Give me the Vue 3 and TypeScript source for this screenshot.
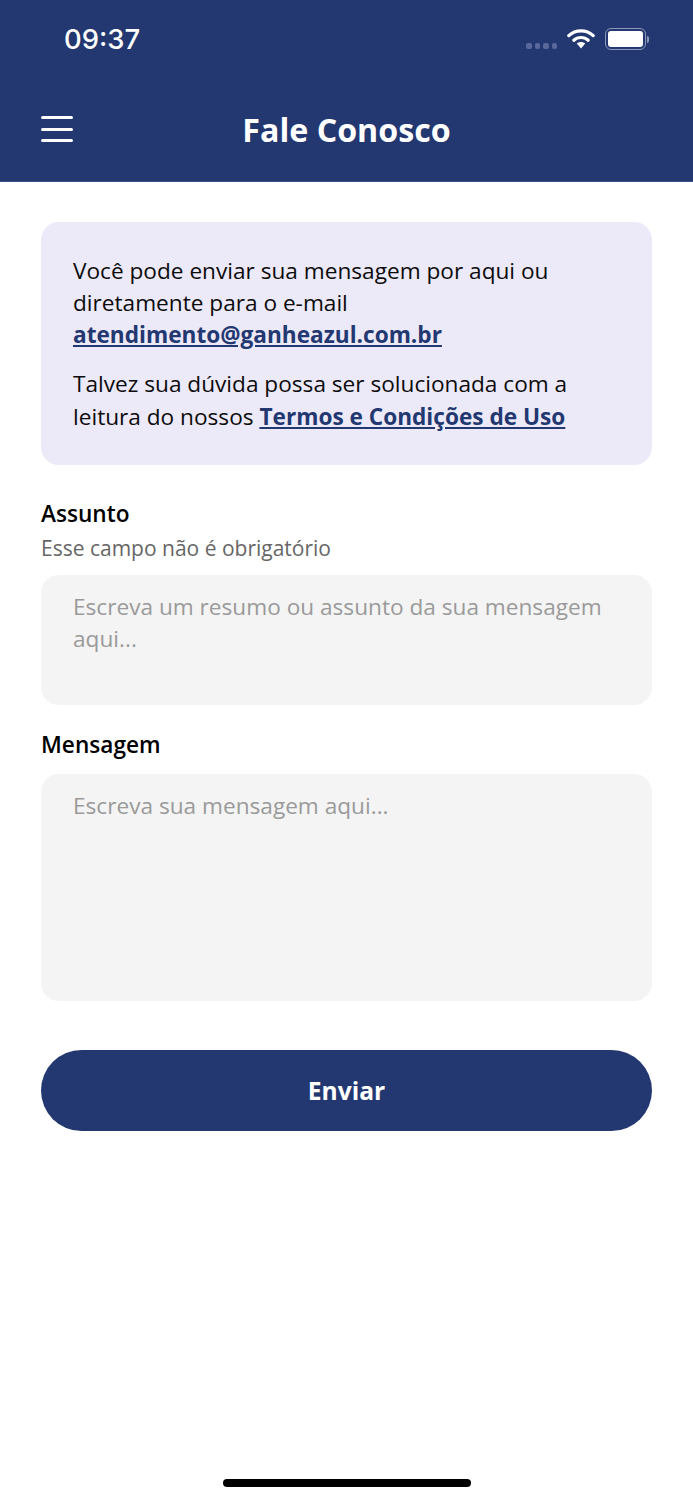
<template>
  <div class="screen">
    <header class="top">
      <div class="status">
        <span class="time">09:37</span>
        <div class="status-icons">
          <div class="signal"><i></i><i></i><i></i><i></i></div>
          <svg class="wifi" width="28" height="21" viewBox="0 0 28 21">
            <path d="M1.8 7.6C8.6 1.2 19.4 1.2 26.2 7.6" fill="none" stroke="#fff" stroke-width="3.2" stroke-linecap="round" />
            <path d="M6.8 12.2C10.8 8.6 17.2 8.6 21.2 12.2" fill="none" stroke="#fff" stroke-width="3.2" stroke-linecap="round" />
            <path d="M9.8 15.6C12.2 13.6 15.8 13.6 18.2 15.6L14 20.4Z" fill="#fff" />
          </svg>
          <div class="battery"><div class="battery-fill"></div></div>
          <div class="battery-tip"></div>
        </div>
      </div>
      <div class="bar">
        <div class="menu"><i></i><i></i><i></i></div>
        <h1>Fale Conosco</h1>
      </div>
    </header>

    <main class="content">
      <section class="notice">
        <p>
          Você pode enviar sua mensagem por aqui ou diretamente para o e-mail
          <a href="#">atendimento@ganheazul.com.br</a>
        </p>
        <p>
          Talvez sua dúvida possa ser solucionada com a leitura do nossos
          <a href="#">Termos e Condições de Uso</a>
        </p>
      </section>

      <div class="field first">
        <label>Assunto</label>
        <span class="hint">Esse campo não é obrigatório</span>
        <div class="input subject">Escreva um resumo ou assunto da sua mensagem aqui...</div>
      </div>

      <div class="field second">
        <label>Mensagem</label>
        <div class="input message">Escreva sua mensagem aqui...</div>
      </div>

      <button class="send" type="button">Enviar</button>
    </main>

    <div class="home-row"><div class="home"></div></div>
  </div>
</template>

<script setup lang="ts">
</script>

<style>
html,
body {
  margin: 0;
  background: #fff;
}
</style>

<style scoped>
.screen {
  width: 693px;
  height: 1500px;
  display: flex;
  flex-direction: column;
  font-family: "Open Sans", sans-serif;
  color: #0c0c0c;
  background: #fff;
  overflow: hidden;
}

.top {
  height: 182px;
  flex: none;
  background: #233871;
  color: #fff;
  box-sizing: border-box;
  border-bottom: 1px solid #3b5289;
}

.status {
  height: 78px;
  display: flex;
  justify-content: space-between;
  align-items: center;
  padding: 0 44px 0 64px;
}

.time {
  font-family: Inter, sans-serif;
  font-size: 27.4px;
  font-weight: 500;
}

.status-icons {
  display: flex;
  align-items: center;
}

.signal {
  display: flex;
  gap: 3px;
  margin: 13px 10px 0 0;
}

.signal i {
  width: 5.5px;
  height: 6px;
  border-radius: 2px;
  background: #58689a;
}

.wifi {
  margin: 0 10px 2px 0;
}

.battery {
  width: 41px;
  height: 22px;
  box-sizing: border-box;
  border: 1.5px solid #8b98bb;
  border-radius: 6px;
  padding: 2px;
}

.battery-fill {
  height: 100%;
  background: #fff;
  border-radius: 3px;
}

.battery-tip {
  width: 2px;
  height: 7px;
  margin-left: 1px;
  background: #8b98bb;
  border-radius: 0 2px 2px 0;
}

.bar {
  height: 103px;
  box-sizing: border-box;
  padding-top: 1px;
  position: relative;
  display: flex;
  justify-content: center;
  align-items: center;
}

.menu {
  position: absolute;
  left: 41px;
  top: 38px;
  width: 32px;
  display: flex;
  flex-direction: column;
  gap: 8.5px;
}

.menu i {
  height: 3px;
  background: #fff;
  border-radius: 2px;
}

h1 {
  margin: 0;
  font-size: 32.2px;
  font-weight: 700;
  line-height: 1;
}

.content {
  flex: 1;
  padding: 40px 41px 0;
  display: flex;
  flex-direction: column;
}

.notice {
  height: 243px;
  box-sizing: border-box;
  background: #ece9f8;
  border-radius: 18px;
  padding: 32.5px 32px 32px;
  font-size: 22.64px;
  line-height: 32.4px;
}

.notice p {
  margin: 0 0 16.5px;
}

.notice a {
  color: #233871;
  font-weight: 700;
  text-decoration: underline;
}

.field {
  display: flex;
  flex-direction: column;
}

.field.first {
  margin-top: 33px;
}

.field.second {
  margin-top: 24px;
}

label {
  font-size: 22.64px;
  font-weight: 600;
  line-height: 32px;
  margin-bottom: 2px;
  color: #000;
}

.hint {
  font-size: 21px;
  line-height: 32px;
  color: #666;
  margin-bottom: 11px;
}

.second label {
  margin-bottom: 13px;
}

.input {
  box-sizing: border-box;
  background: #f4f4f4;
  border-radius: 18px;
  padding: 16px 32px;
  font-size: 22.64px;
  line-height: 32.4px;
  color: #9a9a9a;
}

.subject {
  height: 130px;
}

.message {
  height: 227px;
}

.send {
  margin-top: 49px;
  height: 81px;
  flex: none;
  border: 0;
  border-radius: 41px;
  background: #233871;
  color: #fff;
  font-family: inherit;
  font-size: 24.6px;
  font-weight: 700;
}

.home-row {
  display: flex;
  justify-content: center;
  padding-bottom: 13px;
}

.home {
  width: 248px;
  height: 8px;
  border-radius: 4px;
  background: #000;
}
</style>
